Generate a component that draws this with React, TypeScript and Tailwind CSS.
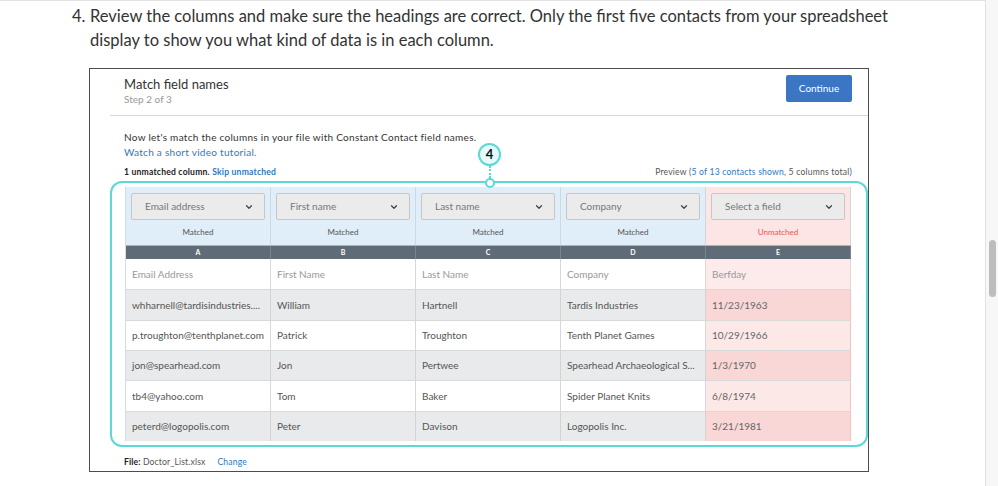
import React from 'react';
import { ChevronDown } from 'lucide-react';

const columns = [
  { letter: 'A', field: 'Email address', header: 'Email Address', matched: true },
  { letter: 'B', field: 'First name', header: 'First Name', matched: true },
  { letter: 'C', field: 'Last name', header: 'Last Name', matched: true },
  { letter: 'D', field: 'Company', header: 'Company', matched: true },
  { letter: 'E', field: 'Select a field', header: 'Berfday', matched: false },
];

const rows = [
  ['whharnell@tardisindustries....', 'William', 'Hartnell', 'Tardis Industries', '11/23/1963'],
  ['p.troughton@tenthplanet.com', 'Patrick', 'Troughton', 'Tenth Planet Games', '10/29/1966'],
  ['jon@spearhead.com', 'Jon', 'Pertwee', 'Spearhead Archaeological S...', '1/3/1970'],
  ['tb4@yahoo.com', 'Tom', 'Baker', 'Spider Planet Knits', '6/8/1974'],
  ['peterd@logopolis.com', 'Peter', 'Davison', 'Logopolis Inc.', '3/21/1981'],
];

const rowHeights = ['h-[31px]', 'h-[30px]', 'h-[30px]', 'h-[31px]', 'h-[30px]'];

const MatchTable = () => {
  return (
    <div className="border-l border-[#d5dbe0]">
      {/* field selectors */}
      <div className="grid grid-cols-5 h-[58px]">
        {columns.map((c) => (
          <div
            key={c.letter}
            className={`${c.matched ? 'bg-[#dfeef8]' : 'bg-[#fde5e5]'} border-r border-[#cfd8df] px-[5px] pt-[6px]`}
          >
            <div className="h-[27px] flex items-center justify-between bg-[#ebebeb] border border-[#c7c7c7] rounded-[2px] pl-[13px] pr-[10px]">
              <span className="text-[10px] text-[#777]">{c.field}</span>
              <ChevronDown size={10} strokeWidth={3} className="text-[#444]" />
            </div>
            <div
              className={`text-center text-[8px] mt-[6px] ${c.matched ? 'text-[#555]' : 'text-[#f0524f]'}`}
            >
              {c.matched ? 'Matched' : 'Unmatched'}
            </div>
          </div>
        ))}
      </div>

      {/* letters */}
      <div className="grid grid-cols-5 h-[14px] bg-[#5f6b77] border-t border-[#aab4bc]">
        {columns.map((c) => (
          <div
            key={c.letter}
            className="border-r border-[#7b8590] flex items-center justify-center text-white text-[7px] font-bold"
          >
            {c.letter}
          </div>
        ))}
      </div>

      {/* spreadsheet header row */}
      <div className="grid grid-cols-5 h-[30px]">
        {columns.map((c) => (
          <div
            key={c.letter}
            className={`${c.matched ? 'bg-white' : 'bg-[#fdeaea]'} border-r border-[#d8d8d8] flex items-center pl-[6px] text-[10px] text-[#999]`}
          >
            {c.header}
          </div>
        ))}
      </div>

      {rows.map((r, i) => {
        const grey = i % 2 === 0;
        return (
          <div key={i} className={`grid grid-cols-5 ${rowHeights[i]} border-t border-[#d9d9d9]`}>
            {r.map((cell, j) => (
              <div
                key={j}
                className={`${
                  j === 4
                    ? grey
                      ? 'bg-[#f9d7d7] border-[#ecc5c5] text-[#666]'
                      : 'bg-[#fde8e8] border-[#ecc5c5] text-[#666]'
                    : grey
                    ? 'bg-[#e9eaeb] border-[#d3d3d3] text-[#555]'
                    : 'bg-white border-[#d8d8d8] text-[#555]'
                } border-r flex items-center pl-[6px] text-[10px] whitespace-nowrap overflow-hidden`}
              >
                {cell}
              </div>
            ))}
          </div>
        );
      })}
    </div>
  );
};

const App = () => {
  return (
    <div className="w-[998px] h-[486px] flex bg-white overflow-hidden" style={{ fontFamily: 'Lato, "Open Sans", sans-serif' }}>
      <div className="w-[986px] h-full border-t border-r border-[#e2e2e2] pl-[72px]">
        {/* step text */}
        <div className="flex text-[16.5px] leading-[24px] text-[#333] pt-[3px]">
          <span className="w-[18px] shrink-0">4.</span>
          <p className="w-[810px]">
            Review the columns and make sure the headings are correct. Only the first five contacts from your
            spreadsheet display to show you what kind of data is in each column.
          </p>
        </div>

        {/* screenshot */}
        <div className="ml-[17px] mt-[16px] w-[780px] h-[404px] border border-[#4d4d4d] text-[#333]">
          <div className="flex justify-between items-start pt-[6px] pl-[34px] pr-[16px]">
            <div className="pt-[1px]">
              <div className="text-[13px] leading-[16px] text-[#333]">Match field names</div>
              <div className="text-[10px] leading-[14px] text-[#999]">Step 2 of 3</div>
            </div>
            <button className="h-[27px] w-[66px] bg-[#3a76c4] rounded-[2px] text-white text-[10px]">
              Continue
            </button>
          </div>
          <div className="ml-[20px] mt-[9px] border-t border-[#d9d9d9]" />

          <div className="pl-[34px] pr-[16px] pt-[14px]">
            <div className="text-[10px] tracking-[0.28px] leading-[15px] text-[#333]">
              Now let's match the columns in your file with Constant Contact field names.
            </div>
            <div className="text-[10px] tracking-[0.28px] leading-[15px] text-[#2d79c0]">
              Watch a short video tutorial.
            </div>
            <div className="flex justify-between items-center mt-[7px] text-[8.6px] tracking-[0.2px] leading-[11px]">
              <div>
                <span className="font-bold text-[#222]">1 unmatched column. </span>
                <span className="font-bold text-[#2d79c0]">Skip unmatched</span>
              </div>
              <div className="text-[#555]">
                Preview (<span className="text-[#2d79c0]">5 of 13 contacts shown</span>, 5 columns total)
              </div>
            </div>
          </div>

          {/* highlighted table */}
          <div className="relative ml-[20px] mt-[3px] border-2 border-[#5ad9d5] rounded-[12px] pl-[13px] pr-[15px] pt-[4px] pb-[4px]">
            <div className="absolute left-[366px] -top-[40px] flex flex-col items-center">
              <div className="w-[23px] h-[23px] rounded-full border-2 border-[#5ad9d5] bg-[#e6fbfa] flex items-center justify-center text-[13px] font-bold text-[#111]">
                4
              </div>
              <div className="h-[12px] border-l-2 border-dotted border-[#5ad9d5]" />
              <div className="w-[10px] h-[10px] rounded-full border-2 border-[#5ad9d5] bg-white" />
            </div>
            <MatchTable />
          </div>

          <div className="pl-[34px] mt-[10px] text-[8.6px] tracking-[0.15px] leading-[11px]">
            <span className="font-bold text-[#222]">File: </span>
            <span className="text-[#555]">Doctor_List.xlsx</span>
            <span className="text-[#2d79c0] ml-[12px]">Change</span>
          </div>
        </div>
      </div>

      {/* scrollbar */}
      <div className="w-[12px] h-full bg-[#f7f7f7] pt-[240px] flex justify-center">
        <div className="w-[7px] h-[57px] rounded-full bg-[#bdbdbd]" />
      </div>
    </div>
  );
};

export default App;
